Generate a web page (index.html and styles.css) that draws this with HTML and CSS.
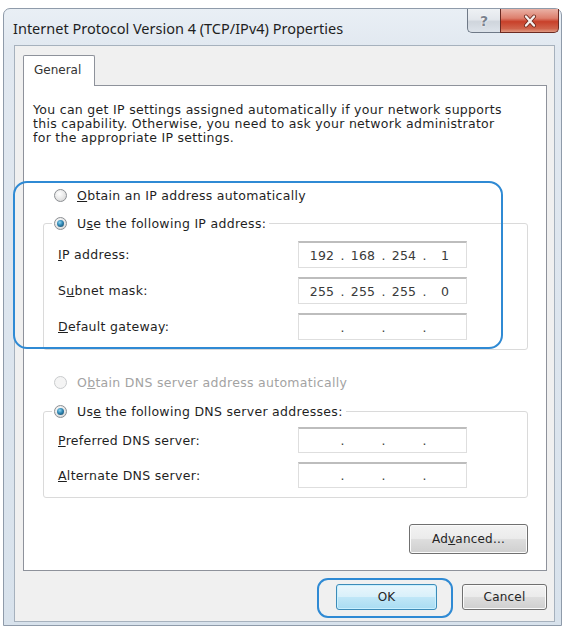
FILE: index.html
```html
<!DOCTYPE html>
<html>
<head>
<meta charset="utf-8">
<link rel="stylesheet" href="styles.css">
</head>
<body>
<div class="window">
  <div class="titlebar">
    <div class="title">Internet Protocol Version 4 (TCP/IPv4) Properties</div>
    <div class="caption-buttons">
      <div class="cap help"><span class="qmark">?</span></div>
      <div class="cap close">
        <svg width="16" height="14" viewBox="0 0 16 14"><path d="M4 2.5 L12 11.5 M12 2.5 L4 11.5" stroke="#6a2418" stroke-width="4" stroke-linecap="round"/><path d="M4 2.5 L12 11.5 M12 2.5 L4 11.5" stroke="#f6f0ee" stroke-width="2.4" stroke-linecap="round"/></svg>
      </div>
    </div>
  </div>
  <div class="client">
    <div class="tabs"><div class="tab">General</div></div>
    <div class="panel">
      <p class="intro">You can get IP settings assigned automatically if your network supports<br>this capability. Otherwise, you need to ask your network administrator<br>for the appropriate IP settings.</p>
      <div class="options">
        <div class="radio-row"><span class="radio"></span><span><u>O</u>btain an IP address automatically</span></div>
        <fieldset class="group">
          <legend class="legend"><span class="radio checked"></span><span>U<u>s</u>e the following IP address:</span></legend>
          <div class="fields fields-ip">
            <div class="field"><span class="label"><u>I</u>P address:</span><div class="ipbox"><span class="oct">192</span><span class="dot">.</span><span class="oct">168</span><span class="dot">.</span><span class="oct">254</span><span class="dot">.</span><span class="oct">1</span></div></div>
            <div class="field"><span class="label">S<u>u</u>bnet mask:</span><div class="ipbox"><span class="oct">255</span><span class="dot">.</span><span class="oct">255</span><span class="dot">.</span><span class="oct">255</span><span class="dot">.</span><span class="oct">0</span></div></div>
            <div class="field"><span class="label"><u>D</u>efault gateway:</span><div class="ipbox"><span class="oct"></span><span class="dot">.</span><span class="oct"></span><span class="dot">.</span><span class="oct"></span><span class="dot">.</span><span class="oct"></span></div></div>
          </div>
        </fieldset>
        <div class="radio-row dns-first disabled"><span class="radio off"></span><span>O<u>b</u>tain DNS server address automatically</span></div>
        <fieldset class="group group-dns">
          <legend class="legend"><span class="radio checked"></span><span>Us<u>e</u> the following DNS server addresses:</span></legend>
          <div class="fields fields-dns">
            <div class="field"><span class="label"><u>P</u>referred DNS server:</span><div class="ipbox"><span class="oct"></span><span class="dot">.</span><span class="oct"></span><span class="dot">.</span><span class="oct"></span><span class="dot">.</span><span class="oct"></span></div></div>
            <div class="field"><span class="label"><u>A</u>lternate DNS server:</span><div class="ipbox"><span class="oct"></span><span class="dot">.</span><span class="oct"></span><span class="dot">.</span><span class="oct"></span><span class="dot">.</span><span class="oct"></span></div></div>
          </div>
        </fieldset>
        <div class="adv-row"><button class="btn adv">Ad<u>v</u>anced...</button></div>
      </div>
    </div>
    <div class="footer">
      <button class="btn ok">OK</button>
      <button class="btn cancel">Cancel</button>
    </div>
  </div>
</div>
<div class="highlight hl-ip"></div>
<div class="highlight hl-ok"></div>
</body>
</html>
```

FILE: styles.css
```css
html, body {
  margin: 0;
  padding: 0;
  background: #ffffff;
}
body {
  position: relative;
  width: 565px;
  height: 631px;
  overflow: hidden;
  font-family: "DejaVu Sans", "Noto Sans", sans-serif;
  font-size: 12.5px;
  letter-spacing: 0.3px;
  color: #1f1f1f;
}
.window {
  box-sizing: border-box;
  margin: 8px 0 0 3px;
  width: 559px;
  height: 618px;
  border: 1px solid #8f9baa;
  border-radius: 7px 7px 0 0;
  background: linear-gradient(#e9eff5 0, #e1e8f0 40px, #d8e2ec 100%);
  display: flex;
  flex-direction: column;
}
.titlebar {
  height: 36px;
  display: flex;
  align-items: flex-start;
  justify-content: space-between;
}
.title {
  padding: 9px 0 0 9px;
  font-family: "Noto Sans", "Open Sans", sans-serif;
  font-size: 14.5px;
  letter-spacing: 0;
  color: #1f1f1f;
  white-space: nowrap;
}
.caption-buttons {
  display: flex;
  margin-right: 2px;
}
.cap {
  box-sizing: border-box;
  height: 24px;
  display: flex;
  align-items: center;
  justify-content: center;
  border: 1px solid #6f7987;
  border-top: none;
}
.help {
  width: 33px;
  border-radius: 0 0 0 5px;
  border-right: none;
  background: linear-gradient(#eef1f4 0, #e3e7ec 45%, #cfd5dc 55%, #dde3ea 100%);
}
.qmark {
  font-family: "DejaVu Sans", sans-serif;
  font-size: 14px;
  font-weight: bold;
  letter-spacing: 0;
  color: #7a828e;
  text-shadow: 0 0 1px #fff, 0 0 2px #fff;
  line-height: 1;
}
.close {
  width: 59px;
  border-radius: 0 0 5px 0;
  border-color: #6b2a22;
  background: linear-gradient(#eab2a6 0, #dd7f6d 40%, #c8402a 55%, #d0634b 85%, #e09a83 100%);
}
.client {
  flex: 1;
  margin: 0 6px 3px 10px;
  border: 1px solid #a6b1bd;
  background: #f0f0f0;
  display: flex;
  flex-direction: column;
}
.tabs {
  display: flex;
  padding: 9px 0 0 8px;
  position: relative;
  z-index: 1;
  margin-bottom: -1px;
}
.tab {
  box-sizing: border-box;
  width: 72px;
  height: 31px;
  border: 1px solid #8e929b;
  border-bottom: none;
  border-radius: 2px 2px 0 0;
  background: #ffffff;
  padding: 7px 0 0 10px;
  font-size: 12px;
  letter-spacing: 0;
  color: #333;
}
.panel {
  box-sizing: border-box;
  margin-left: 8px;
  width: 524px;
  height: 486px;
  border: 1px solid #8e929b;
  background: #ffffff;
}
.intro {
  margin: 17px 0 0 9px;
  line-height: 14px;
  white-space: nowrap;
}
.options {
  margin-left: 19px;
  width: 485px;
}
.radio-row {
  height: 20px;
  display: flex;
  align-items: center;
  gap: 10px;
  padding-left: 11px;
  margin-top: 40px;
  white-space: nowrap;
}
.radio-row.disabled {
  color: #a3a3a3;
}
.dns-first {
  margin-top: 22px;
}
.radio {
  box-sizing: border-box;
  width: 13px;
  height: 13px;
  border-radius: 50%;
  border: 1px solid #8c8f93;
  background: radial-gradient(circle at 40% 35%, #ffffff 0, #e6e6e6 55%, #cfcfcf 100%);
  display: flex;
  align-items: center;
  justify-content: center;
  flex: none;
}
.radio.checked::after {
  content: "";
  width: 7px;
  height: 7px;
  border-radius: 50%;
  background: radial-gradient(circle at 40% 35%, #8fd6f2 0, #2f86b3 45%, #173f57 100%);
}
.radio.off {
  border-color: #c9cbcd;
  background: #f4f4f4;
}
.group {
  box-sizing: border-box;
  margin: 8px 0 0 0;
  padding: 0 0 9px 0;
  border: 1px solid #dadada;
  border-radius: 3px;
  width: 485px;
}
.group-dns {
  margin-top: 9px;
}
.legend {
  margin-left: 8px;
  padding: 0 3px 0 2px;
  height: 20px;
  display: flex;
  align-items: center;
  gap: 10px;
  white-space: nowrap;
}
.fields {
  display: flex;
  flex-direction: column;
  gap: 9px;
  margin-top: 8px;
}
.fields-dns {
  margin-top: 6px;
}
.field {
  display: flex;
  align-items: center;
  padding-left: 14px;
  height: 27px;
}
.fields-dns .field {
  height: 26px;
}
.label {
  width: 240px;
  white-space: nowrap;
}
.ipbox {
  box-sizing: border-box;
  width: 169px;
  height: 100%;
  border: 1px solid #dedede;
  border-top: 2px solid #bdbdbd;
  background: #ffffff;
  display: flex;
  align-items: center;
  padding-left: 6px;
  color: #3a3a3a;
  letter-spacing: 0.2px;
}
.oct {
  width: 34px;
  text-align: center;
}
.dot {
  width: 7px;
  text-align: center;
}
.adv-row {
  display: flex;
  justify-content: flex-end;
  margin-top: 26px;
}
.btn {
  box-sizing: border-box;
  font-family: "DejaVu Sans", "Noto Sans", sans-serif;
  font-size: 12px;
  letter-spacing: 0.2px;
  color: #262626;
  border: 1px solid #707070;
  border-radius: 3px;
  background: linear-gradient(#f3f3f3 0, #ebebeb 48%, #dddddd 52%, #cfcfcf 100%);
  padding: 0;
  box-shadow: inset 0 0 0 1px #fbfbfb;
}
.adv {
  width: 119px;
  height: 30px;
}
.footer {
  display: flex;
  justify-content: flex-end;
  gap: 25px;
  padding: 13px 7px 0 0;
}
.ok {
  width: 101px;
  height: 26px;
  border-color: #3c8bb8;
  background: linear-gradient(#eaf6fc 0, #d9f0fa 48%, #bfe6f7 52%, #a9dcf2 100%);
  box-shadow: inset 0 0 0 1px #c9f0ff;
}
.cancel {
  width: 85px;
  height: 26px;
}
.highlight {
  position: absolute;
  box-sizing: border-box;
  border: 2.5px solid #2f8ad4;
}
.hl-ip {
  left: 13px;
  top: 181px;
  width: 490px;
  height: 168px;
  border-radius: 14px;
}
.hl-ok {
  left: 317px;
  top: 578px;
  width: 136px;
  height: 40px;
  border-radius: 11px;
}
```
